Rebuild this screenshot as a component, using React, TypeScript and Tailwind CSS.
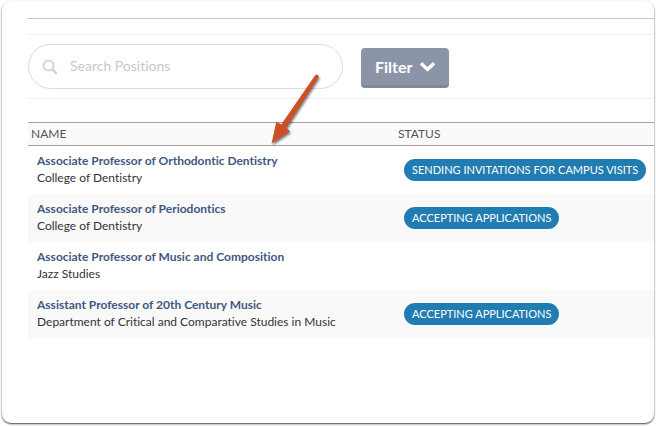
import React, { useState } from 'react';

interface Position {
  title: string;
  unit: string;
  status?: string;
}

const positions: Position[] = [
  {
    title: 'Associate Professor of Orthodontic Dentistry',
    unit: 'College of Dentistry',
    status: 'SENDING INVITATIONS FOR CAMPUS VISITS',
  },
  {
    title: 'Associate Professor of Periodontics',
    unit: 'College of Dentistry',
    status: 'ACCEPTING APPLICATIONS',
  },
  {
    title: 'Associate Professor of Music and Composition',
    unit: 'Jazz Studies',
  },
  {
    title: 'Assistant Professor of 20th Century Music',
    unit: 'Department of Critical and Comparative Studies in Music',
    status: 'ACCEPTING APPLICATIONS',
  },
];

const SearchIcon = () => (
  <svg viewBox="0 0 16 16" className="absolute left-[14px] top-[15px] w-4 h-4" fill="none" stroke="#d6d6d6" aria-hidden="true">
    <circle cx="6.5" cy="6.5" r="5" strokeWidth="2.2" />
    <path d="M10.3 10.3 L14 14" strokeWidth="2.6" strokeLinecap="round" />
  </svg>
);

const ChevronIcon = () => (
  <svg viewBox="0 0 15 10" className="w-[15px] h-[10px]" fill="none" stroke="#fff" aria-hidden="true">
    <path d="M2.2 2.4 L7.5 7.4 L12.8 2.4" strokeWidth="3.4" strokeLinecap="square" />
  </svg>
);

// Callout arrow that points at the first position
const Pointer = () => (
  <svg viewBox="0 0 60 80" className="absolute left-[266px] top-[70px] w-[60px] h-20 pointer-events-none drop-shadow-[1px_2px_1px_rgba(0,0,0,0.5)]" aria-hidden="true">
    <path d="M5.6 73.5 L10.4 51.6 L15.2 54.4 L49 5.6 Q50.4 3.9 52 4.9 Q53.3 5.9 52.4 7.6 L20.2 57.8 L24 61.2 Z" fill="#cb5028" />
  </svg>
);

const PositionRow: React.FC<{ position: Position }> = ({ position }) => (
  <tr className="h-12 even:bg-[#f9f9f9]">
    <td className="pl-[9px] pt-0 pb-[2px] align-middle">
      <a href="#" className="block font-bold leading-[17px] text-[#415880]">{position.title}</a>
      <span className="block leading-[17px] text-[#333]">{position.unit}</span>
    </td>
    <td className="pl-[9px] py-0 align-middle">
      {position.status && (
        <span className="flex w-fit items-center h-[22px] px-2 rounded-full bg-[#217cb1] text-white text-[11px] whitespace-nowrap">
          {position.status}
        </span>
      )}
    </td>
  </tr>
);

const App: React.FC = () => {
  const [query, setQuery] = useState('');

  return (
    <div className="relative flex min-h-screen bg-white px-[2px] pt-px pb-[3px] font-['Lato',sans-serif] text-xs [font-variant-ligatures:none]">
      <main className="flex-1 min-w-0 overflow-hidden rounded-[9px] bg-white pl-[26px] pt-[17px] shadow-[0_1px_2px_rgba(0,0,0,0.75)]">
        <div className="border-t border-[#c6c6c6] pb-[15px]" />

        <form className="flex items-center gap-[18px] border-y border-[#eee] py-[9px]" onSubmit={(e) => e.preventDefault()}>
          <div className="relative w-[315px]">
            <SearchIcon />
            <input
              type="text"
              aria-label="Search Positions"
              placeholder="Search Positions"
              value={query}
              onChange={(e) => setQuery(e.target.value)}
              className="w-full h-[45px] rounded-full border border-[#dcdcdc] pl-[41px] pr-4 pb-[2px] text-sm text-[#333] placeholder:text-[#c8c8c8] outline-none"
            />
          </div>
          <button type="button" className="flex items-center gap-2 h-10 px-[14px] mt-[3px] rounded-[4px] border-b-3 border-[#7f899c] bg-[#8c95a7] text-white text-base font-bold">
            Filter
            <ChevronIcon />
          </button>
        </form>

        <table className="mt-[23px] w-full border-separate border-spacing-0">
          <thead>
            <tr className="h-6 bg-[#fafafa] text-left text-[#555]">
              <th scope="col" className="w-[367px] border-y border-[#a3a3a3] pl-[3px] py-0 font-normal">NAME</th>
              <th scope="col" className="border-y border-[#a3a3a3] pl-[3px] py-0 font-normal">STATUS</th>
            </tr>
          </thead>
          <tbody>
            {positions.map((position) => (
              <PositionRow key={position.title} position={position} />
            ))}
          </tbody>
        </table>
      </main>

      <Pointer />
    </div>
  );
};

export default App;
